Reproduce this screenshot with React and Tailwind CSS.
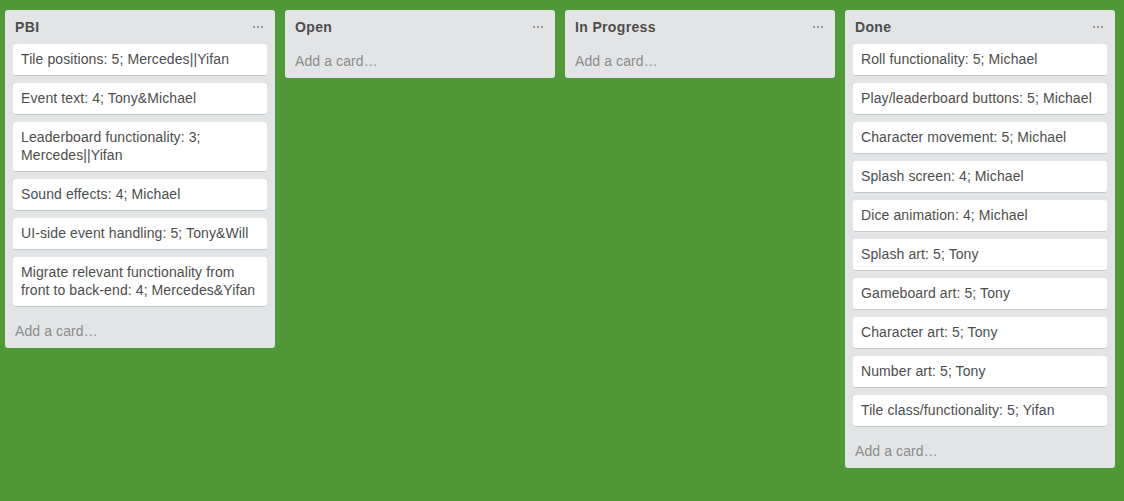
const lists = [
  {
    title: "PBI",
    cards: [
      "Tile positions: 5; Mercedes||Yifan",
      "Event text: 4; Tony&Michael",
      "Leaderboard functionality: 3; Mercedes||Yifan",
      "Sound effects: 4; Michael",
      "UI-side event handling: 5; Tony&Will",
      "Migrate relevant functionality from front to back-end: 4; Mercedes&Yifan",
    ],
  },
  { title: "Open", cards: [] },
  { title: "In Progress", cards: [] },
  {
    title: "Done",
    cards: [
      "Roll functionality: 5; Michael",
      "Play/leaderboard buttons: 5; Michael",
      "Character movement: 5; Michael",
      "Splash screen: 4; Michael",
      "Dice animation: 4; Michael",
      "Splash art: 5; Tony",
      "Gameboard art: 5; Tony",
      "Character art: 5; Tony",
      "Number art: 5; Tony",
      "Tile class/functionality: 5; Yifan",
    ],
  },
];

function List({ title, cards }) {
  return (
    <div className="w-[270px] shrink-0 rounded-[3px] bg-[#e2e4e6] self-start">
      <div className="flex items-center justify-between pl-[10px] pr-[10px] pt-[8px] pb-[8px] h-[34px]">
        <span className="text-[14px] leading-[18px] font-bold tracking-[0.35px] text-[#4d4d4d]">{title}</span>
        <span className="flex gap-[2px] items-center mr-[2px]">
          <span className="w-[2px] h-[2px] bg-[#999]" />
          <span className="w-[2px] h-[2px] bg-[#999]" />
          <span className="w-[2px] h-[2px] bg-[#999]" />
        </span>
      </div>
      <div className="flex flex-col gap-[7px] px-[8px]">
        {cards.map((c) => (
          <div
            key={c}
            className="bg-white rounded-[3px] border-b border-[#c4c9cc] pl-[8px] pr-[8px] pt-[6px] pb-[7px] text-[14px] leading-[18px] tracking-[0.1px] text-[#4d4d4d]"
          >
            {c}
          </div>
        ))}
      </div>
      <div className={"px-[10px] py-[8px] text-[14px] leading-[18px] tracking-[0.1px] text-[#8c8c8c] " + (cards.length ? "mt-[7px]" : "")}>
        Add a card…
      </div>
    </div>
  );
}

export default function App() {
  return (
    <div
      className="w-[1124px] h-[501px] bg-[#519839] flex gap-[10px] pl-[5px] pt-[10px] overflow-hidden"
      style={{ fontFamily: '"Liberation Sans", Arial, sans-serif' }}
    >
      {lists.map((l) => (
        <List key={l.title} {...l} />
      ))}
    </div>
  );
}
